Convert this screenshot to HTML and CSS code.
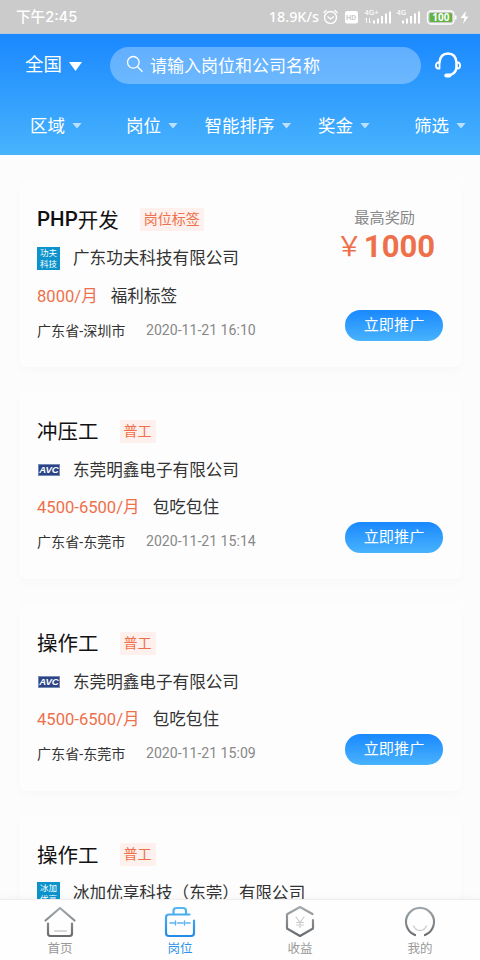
FILE: index.html
```html
<!DOCTYPE html>
<html lang="zh-CN">
<head>
<meta charset="utf-8">
<title>岗位</title>
<link rel="stylesheet" href="styles.css">
</head>
<body>
<div class="app">
  <div class="status">
    <span class="clock">下午2:45</span>
    <span class="speed">18.9K/s</span>
    <svg class="status-icons" width="150" height="24" viewBox="0 0 150 24" fill="none" stroke="#fff">
      <circle cx="9.500" cy="12.500" r="6" stroke-width="1.400"/><path d="M6.500 11.500l3 2.500 3.500-2.500M2.500 8l3-3M16.500 8l-3-3" stroke-width="1.300"/>
      <rect x="24" y="6" width="13" height="12.500" rx="2" fill="#fff" stroke="none"/>
      <text x="25" y="15.300" class="hd">HD</text>
      <text x="43.500" y="9.500" class="net">4G+</text>
      <path d="M45.500 13v5m-1.500-3.500l1.500-1.500M48.500 13v5l1.500-1.500" stroke-width=".8"/>
      <path d="M53 18.500v-3M57 18.500v-5M61 18.500v-7.500M65 18.500v-10M69 18.500v-12" stroke-width="2"/>
      <text x="75.500" y="9.500" class="net">4G</text>
      <path d="M82 18.500v-3M86 18.500v-5M90 18.500v-7.500M94 18.500v-10M98 18.500v-12" stroke-width="2"/>
      <rect x="106.500" y="6" width="26.500" height="13" rx="3.500" stroke-width="1.300"/>
      <rect x="108.500" y="8" width="22.500" height="9" rx="1.500" fill="#62b345" stroke="none"/>
      <path d="M134.800 10.500v4" stroke-width="1.500"/>
      <text x="119.800" y="16.200" text-anchor="middle" class="battery">100</text>
      <path d="M145 6l-5.500 7h4l-1.500 6 5.500-7.500h-3.500z" fill="#fff" stroke="none"/>
    </svg>
  </div>
  <header class="header">
    <div class="top">
      <div class="city">全国<i class="caret big"></i></div>
      <div class="search">
        <svg width="18" height="18" viewBox="0 0 18 18" fill="none" stroke="#fff" stroke-width="1.300"><circle cx="7.300" cy="7.300" r="5.800"/><path d="M11.500 11.800l5 5"/></svg>
        <span>请输入岗位和公司名称</span>
      </div>
      <svg class="service" width="28" height="28" viewBox="0 0 28 28" fill="none" stroke="#fff" stroke-width="2" stroke-linecap="round" stroke-linejoin="round">
        <path d="M5.500 11.500C6 6 9 2.500 14 2.500S22 6 22.500 11.500V17c-.8 4-4 7-8.500 7.500" stroke-width="2.400"/>
        <path d="M5.500 11.500H4.500C1 11.500 1 17.500 4.500 17.500H5.500zM22.500 11.500h1c3.500 0 3.500 6 0 6H22.500z" stroke-width="1.800"/>
        <path d="M12.300 24.500h3" stroke-width="4"/>
      </svg>
    </div>
    <nav class="filters">
      <span>区域<i class="caret"></i></span>
      <span>岗位<i class="caret"></i></span>
      <span>智能排序<i class="caret"></i></span>
      <span>奖金<i class="caret"></i></span>
      <span>筛选<i class="caret"></i></span>
    </nav>
  </header>
  <main class="list">
    <article class="card">
      <div class="info">
        <div class="title"><b>PHP</b>开发<span class="tag">岗位标签</span></div>
        <div class="company"><span class="logo">功夫<br>科技</span>广东功夫科技有限公司</div>
        <div class="pay"><b>8000/月</b>福利标签</div>
        <div class="place">广东省-深圳市<time>2020-11-21 16:10</time></div>
      </div>
      <div class="side">
        <div class="reward">最高奖励<strong><span>￥</span>1000</strong></div>
        <button class="promote">立即推广</button>
      </div>
    </article>
    <article class="card">
      <div class="info">
        <div class="title">冲压工<span class="tag">普工</span></div>
        <div class="company"><span class="avc">AVC</span>东莞明鑫电子有限公司</div>
        <div class="pay"><b>4500-6500/月</b>包吃包住</div>
        <div class="place">广东省-东莞市<time>2020-11-21 15:14</time></div>
      </div>
      <div class="side"><button class="promote">立即推广</button></div>
    </article>
    <article class="card">
      <div class="info">
        <div class="title">操作工<span class="tag">普工</span></div>
        <div class="company"><span class="avc">AVC</span>东莞明鑫电子有限公司</div>
        <div class="pay"><b>4500-6500/月</b>包吃包住</div>
        <div class="place">广东省-东莞市<time>2020-11-21 15:09</time></div>
      </div>
      <div class="side"><button class="promote">立即推广</button></div>
    </article>
    <article class="card">
      <div class="info">
        <div class="title">操作工<span class="tag">普工</span></div>
        <div class="company"><span class="logo">冰加<br>优享</span>冰加优享科技（东莞）有限公司</div>
      </div>
    </article>
  </main>
  <footer class="tabs">
    <div class="tab">
      <svg width="34" height="34" viewBox="0 0 34 34" fill="none" stroke="url(#gray)" stroke-width="2.200" stroke-linecap="round" stroke-linejoin="round">
        <defs>
          <linearGradient id="gray" gradientUnits="userSpaceOnUse" x1="0" y1="1" x2="0" y2="32"><stop stop-color="#a5acb1"/><stop offset="1" stop-color="#66696c"/></linearGradient>
          <linearGradient id="blue" gradientUnits="userSpaceOnUse" x1="0" y1="1" x2="0" y2="32"><stop stop-color="#58b9f2"/><stop offset="1" stop-color="#238ae5"/></linearGradient>
        </defs>
        <path d="M2.500 15.500L17 3l14.500 12.500M5 18.500V28.500q0 2.500 2.500 2.500h19Q29 31 29 28.500V18.500"/>
        <path d="M11.500 26h12" stroke="#ccc" stroke-width="1.300"/>
      </svg>
      <span>首页</span>
    </div>
    <div class="tab active">
      <svg width="34" height="34" viewBox="0 0 34 34" fill="none" stroke="url(#blue)" stroke-width="2.200" stroke-linecap="round" stroke-linejoin="round">
        <path d="M26.500 9.500H6Q3 9.500 3 12.500V28Q3 31 6 31H28Q31 31 31 28V15.500M10.500 9V6q0-3 3-3h6.500q3 0 3 3V9"/>
        <path d="M7 18h4.500M14.500 18h5.500M23 18h4M12.500 16v4M21.500 16v4" stroke="#58b4f2" stroke-width="1.400"/>
      </svg>
      <span>岗位</span>
    </div>
    <div class="tab">
      <svg width="34" height="34" viewBox="0 0 34 34" fill="none" stroke="url(#gray)" stroke-width="2.200" stroke-linecap="round" stroke-linejoin="round">
        <path d="M29.500 9L17 2 4 9.300V23.500L17 31l13-7.500V15"/>
        <path d="M13 12l4 5.500 4-5.500M17 17.500v5M13.500 17.500h7M13.500 20h7" stroke="#ccc" stroke-width="1.200"/>
      </svg>
      <span>收益</span>
    </div>
    <div class="tab">
      <svg width="34" height="34" viewBox="0 0 34 34" fill="none" stroke="url(#gray)" stroke-width="2.200" stroke-linecap="round">
        <path d="M12 30A14 14 0 1 1 22 30"/>
        <path d="M10.500 21c3 6 10 6 13 0" stroke="#ccc" stroke-width="1.300"/>
      </svg>
      <span>我的</span>
    </div>
  </footer>
</div>
</body>
</html>
```
FILE: styles.css
```css
* { box-sizing: border-box; }
body {
  margin: 0;
  font-family: Roboto, "Noto Sans CJK SC", sans-serif;
  background: #fcfcfc;
}
.app {
  width: 480px;
  height: 960px;
  display: flex;
  flex-direction: column;
  overflow: hidden;
}
.status {
  flex: none;
  height: 34px;
  display: flex;
  align-items: center;
  padding: 0 9px 0 16px;
  background: #cbcbcb;
  color: #fff;
  border-bottom: 1px solid #b3c9e2;
}
.clock { font: 500 14.6px/20px Inter, "Noto Sans CJK SC", sans-serif; }
.speed { margin-left: auto; font: 500 14.4px/20px "Noto Sans", sans-serif; }
.status-icons { margin-left: 2px; }
.hd { font: 700 7.5px Roboto, sans-serif; fill: #cbcbcb; stroke: none; }
.net { font: 500 7.5px "Noto Sans", sans-serif; fill: #fff; stroke: none; }
.battery { font: 700 10px "Noto Sans", sans-serif; fill: #fff; stroke: none; }
.header {
  flex: none;
  height: 121px;
  color: #fff;
  background: linear-gradient(#1a88ff, #48b3fc);
}
.top { display: flex; align-items: center; height: 62px; padding-left: 25px; }
.city { width: 85px; display: flex; align-items: center; font-size: 18.5px; line-height: 28px; }
.caret {
  width: 10px;
  height: 6px;
  margin-left: 7px;
  background: rgba(255, 255, 255, .65);
  clip-path: polygon(0 0, 100% 0, 50% 100%);
}
.caret.big { width: 13px; height: 9px; background: #fff; margin-top: 3px; }
.search {
  width: 311px;
  height: 37px;
  border-radius: 19px;
  background: rgba(255, 255, 255, .3);
  display: flex;
  align-items: center;
  padding: 0 0 2px 16px;
  gap: 6px;
  font-size: 17px;
}
.service { margin-left: 13px; }
.filters {
  display: grid;
  grid-template-columns: repeat(5, 96px);
  margin-left: 8px;
  height: 56px;
  font-size: 17.5px;
}
.filters span { display: flex; align-items: center; justify-content: center; white-space: nowrap; }
.filters .caret { margin-top: 3px; }
.list {
  flex: 1;
  min-height: 0;
  overflow: hidden;
  padding: 26px 19px 0 20px;
}
.card {
  height: 186px;
  margin-bottom: 25.8px;
  padding: 18px 18px 0 17px;
  display: flex;
  justify-content: space-between;
  border-radius: 6px;
  background: #fdfdfd;
  box-shadow: 0 4px 10px rgba(0, 0, 0, .018);
}
.info { color: #333; white-space: nowrap; }
.title {
  display: flex;
  align-items: center;
  height: 39px;
  font-size: 20.5px;
  color: #111;
}
.title b { font-weight: 500; }
.tag {
  margin: 2px 0 0 21px;
  padding: 0 4px;
  height: 23px;
  line-height: 22px;
  border-radius: 2px;
  background: #fef0ec;
  color: #ee704b;
  font-size: 14px;
}
.company { display: flex; align-items: center; height: 38px; font-size: 16.6px; }
.logo {
  width: 23px;
  height: 23px;
  margin: 3px 13px 0 0;
  padding-top: 1px;
  background: #0c93cc;
  color: #fff;
  font-size: 8.5px;
  line-height: 11px;
  text-align: center;
}
.avc {
  width: 22px;
  height: 12px;
  margin: 2px 13px 0 1px;
  background: #2a4587;
  border: 1px solid #7888b3;
  color: #fff;
  font: italic 700 9.5px/10px "Liberation Sans", sans-serif;
  text-align: center;
}
.pay { display: flex; align-items: center; height: 37px; font-size: 16.6px; }
.pay b { font-weight: 400; color: #ee704b; margin-right: 13px; }
.place { display: flex; align-items: center; height: 33px; font-size: 14.1px; }
.place time { margin-left: 20.5px; color: #888; }
.side {
  width: 98px;
  display: flex;
  flex-direction: column;
  justify-content: flex-end;
  padding-bottom: 26px;
}
.reward {
  margin-bottom: auto;
  padding-top: 9px;
  display: flex;
  flex-direction: column;
  align-items: flex-end;
  color: #888;
  font-size: 15.2px;
  line-height: 20px;
  padding-right: 28px;
}
.reward strong {
  display: flex;
  align-items: center;
  margin-right: -20px;
  margin-top: 3px;
  font-size: 31px;
  line-height: 32px;
  color: #ee704b;
}
.reward strong span { font-size: 27px; font-weight: 400; margin-right: 1px; }
.promote {
  height: 31px;
  padding: 0 0 1px;
  border: 0;
  border-radius: 16px;
  background: linear-gradient(#1a88ff, #48b3fc);
  color: #fff;
  font: 15.2px/30px Roboto, "Noto Sans CJK SC", sans-serif;
}
.tabs {
  flex: none;
  height: 61px;
  display: grid;
  grid-template-columns: repeat(4, 1fr);
  background: #fefefe;
  border-top: 1px solid #eee;
  box-shadow: 0 -2px 6px rgba(0, 0, 0, .03);
}
.tab {
  display: flex;
  flex-direction: column;
  align-items: center;
  padding-top: 5px;
  color: #999;
  font-size: 12.5px;
  line-height: 20px;
}
.tab.active { color: #2c92e8; }
```
